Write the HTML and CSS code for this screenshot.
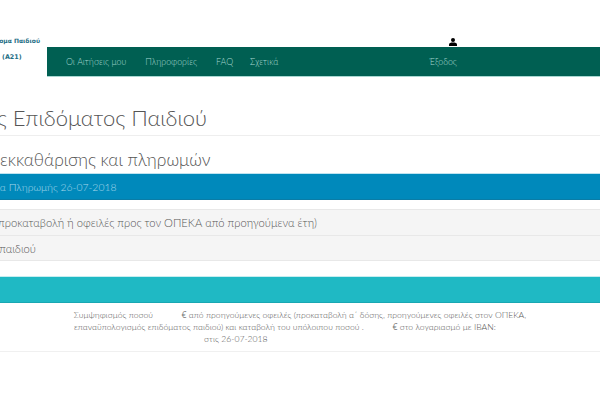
FILE: index.html
```html
<!DOCTYPE html>
<html lang="el">
<head>
<meta charset="utf-8">
<title>Επίδομα Παιδιού</title>
<link rel="stylesheet" href="styles.css">
</head>
<body>
<div class="page">
  <header class="top">
    <div class="brand">
      <div class="brand-name">Επίδομα Παιδιού</div>
      <div class="brand-code">(A21)</div>
    </div>
    <div class="top-main">
      <div class="user">
        <svg class="user-icon" viewBox="0 0 8 8" width="8" height="8"><circle cx="4" cy="2.1" r="2"/><path d="M0 8V6.4C0 5 1.6 4.4 4 4.4S8 5 8 6.4V8Z"/></svg>
      </div>
      <nav class="nav">
        <a class="nav-item">Οι Αιτήσεις μου</a>
        <a class="nav-item">Πληροφορίες</a>
        <a class="nav-item nav-faq">FAQ</a>
        <a class="nav-item">Σχετικά</a>
        <a class="nav-item nav-exit">Έξοδος</a>
      </nav>
    </div>
  </header>
  <main class="content">
    <h1 class="title">Εκκαθάρισης Επιδόματος Παιδιού</h1>
    <h2 class="subtitle"><span class="sub-lead">Στοιχεία</span>εκκαθάρισης και πληρωμών</h2>
    <div class="bar bar-blue">Ημερομηνία Πληρωμής 26-07-2018</div>
    <div class="rows">
      <div class="row">Οφειλές (προκαταβολή ή οφειλές προς τον ΟΠΕΚΑ από προηγούμενα έτη)</div>
      <div class="row">Επίδομα παιδιού</div>
    </div>
    <div class="bar bar-teal"></div>
    <div class="note">
      <p>Συμψηφισμός ποσού <span class="blank"></span> <span class="euro">€</span> από προηγούμενες οφειλές (προκαταβολή α΄ δόσης, προηγούμενες οφειλές στον ΟΠΕΚΑ,</p>
      <p>επαναϋπολογισμός επιδόματος παιδιού) και καταβολή του υπόλοιπου ποσού . <span class="blank"></span> <span class="euro">€</span> στο λογαριασμό με IBAN: <span class="blank-iban"></span></p>
      <p>στις 26-07-2018 <span class="blank-date"></span></p>
    </div>
  </main>
</div>
</body>
</html>
```
FILE: styles.css
```css
html, body { margin: 0; padding: 0; background: #fff; }
body { width: 600px; height: 400px; overflow: hidden; font-family: "Lato", "Open Sans", sans-serif; color: #555; }
.page { width: 600px; }
.top { display: flex; height: 77px; }
.brand { width: 47px; flex: none; padding-top: 36px; box-sizing: border-box; font-family: "DejaVu Sans", sans-serif; font-weight: 700; font-size: 6px; color: #1f6f86; white-space: nowrap; direction: rtl; }
.brand-name { height: 17px; line-height: 9px; padding-right: 7px; }
.brand-code { line-height: 9px; direction: ltr; padding-left: 2px; font-size: 6.4px; }
.top-main { flex: 1; display: flex; flex-direction: column; }
.user { height: 47px; box-sizing: border-box; padding: 38px 0 0 402px; }
.user-icon { display: block; fill: #000; }
.nav { height: 29px; background: #005f52; border-bottom: 1px solid #a9d8d2; display: flex; align-items: center; padding-left: 19px; font-size: 8.8px; font-weight: 300; color: #a5d6cf; }
.nav-item { margin-right: 19px; }
.nav-faq { margin-right: 17px; }
.nav-exit { margin-left: 132px; }
.content { margin-left: -120px; width: 840px; }
.title { margin: 0; height: 59px; box-sizing: border-box; border-bottom: 1px solid #eee; padding: 26px 0 0 3px; font-size: 22px; line-height: 30px; font-weight: 300; color: #555; white-space: nowrap; }
.subtitle { margin: 0; height: 38px; padding: 12px 0 0 120px; box-sizing: border-box; font-size: 17.4px; line-height: 24px; font-weight: 300; color: #555; white-space: nowrap; }
.sub-lead { display: inline-block; vertical-align: top; width: 100px; margin-left: -100px; overflow: hidden; }
.bar { height: 26px; box-sizing: border-box; }
.bar-blue { background: #0089bb; color: #a8d8ea; box-shadow: 0 -1px 0 #bfe3f0; border-bottom: 1px solid #0a7ca6; padding-left: 70px; font-size: 10.4px; font-weight: 300; line-height: 27px; }
.rows { margin-top: 9px; margin-bottom: 16px; }
.row { height: 26px; box-sizing: border-box; background: #f5f5f5; border-top: 1px solid #e8e8e8; line-height: 25px; font-size: 11.2px; font-weight: 300; color: #555; white-space: nowrap; padding-left: 72px; }
.row + .row { border-bottom: 1px solid #e8e8e8; padding-left: 75px; }
.bar-teal { background: #1fb9c4; box-shadow: 0 -1px 0 #c6edf0; border-bottom: 1px solid #1aa7b2; }
.note { height: 49px; box-sizing: border-box; padding-top: 6px; border-bottom: 1px solid #f0f0f0; font-size: 8.6px; line-height: 12px; font-weight: 300; text-align: center; color: #555; }
.note p { margin: 0; }
.euro { font-family: "Open Sans", sans-serif; font-weight: 400; color: #777; }
.blank { display: inline-block; width: 24px; }
.blank-iban { display: inline-block; width: 28px; }
.blank-date { display: inline-block; width: 126px; }
```
